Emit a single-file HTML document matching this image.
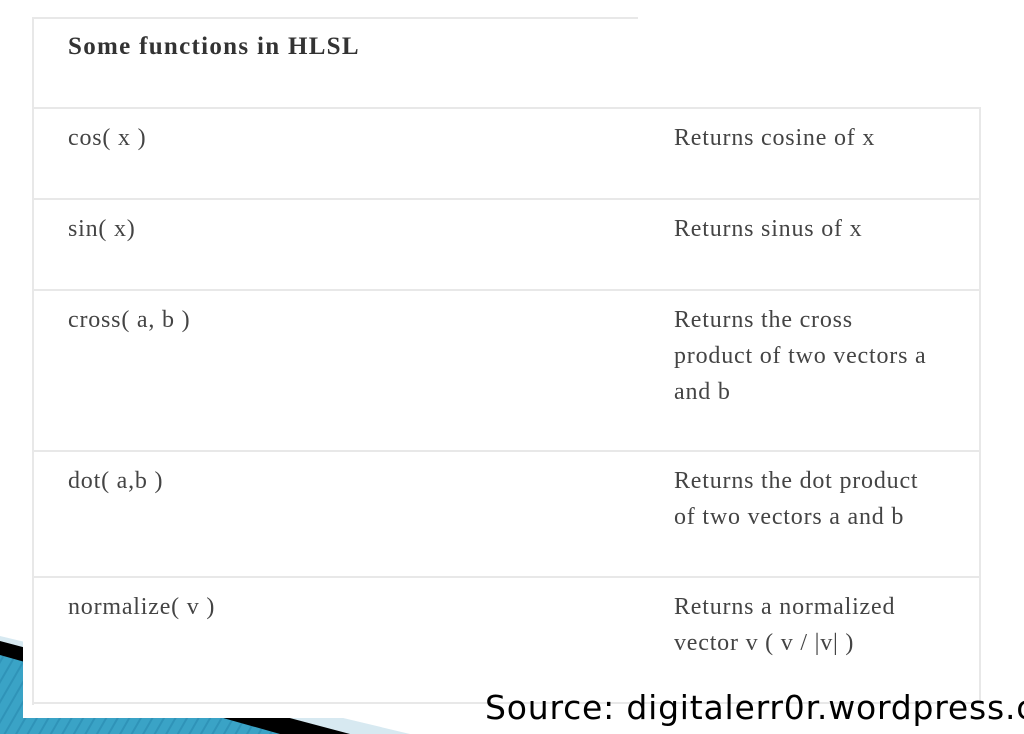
<!DOCTYPE html>
<html><head><style>
html,body{margin:0;width:1024px;height:734px;overflow:hidden}
body{background:#fff;position:relative;font-family:"Liberation Serif",serif;}
svg.bg{position:absolute;left:0;top:0}
.box{position:absolute;left:23px;top:0;width:1001px;height:718px;background:#fff}
.t{position:absolute;color:#444;font-size:24px;line-height:36px;letter-spacing:0.8px;white-space:nowrap}
.line{position:absolute;background:#e8e8e8}
.srcw{position:absolute;left:485px;top:688px;width:539px;height:46px;overflow:hidden}
.src{font-family:"DejaVu Sans","Liberation Sans",sans-serif;font-size:33px;color:#000;white-space:nowrap;letter-spacing:0.8px;line-height:40px}
</style></head><body>
<svg class="bg" width="1024" height="734">
<defs><pattern id="st" width="10" height="10" patternUnits="userSpaceOnUse" patternTransform="rotate(30)"><rect width="10" height="10" fill="#3aa3c6"/><rect width="2" height="10" fill="#2f93b8"/></pattern></defs>
<polygon points="0,636 410,734 0,734" fill="#d7e9f1"/>
<polygon points="0,641 350,734 0,734" fill="#000"/>
<polygon points="0,655 280,734 0,734" fill="url(#st)"/>
</svg>
<div class="box"></div>
<div class="line" style="left:32px;top:17px;width:606px;height:2px"></div>
<div class="line" style="left:32px;top:17px;width:2px;height:688px"></div>
<div class="line" style="left:979px;top:108px;width:2px;height:597px"></div>
<div class="line" style="left:32px;top:107px;width:949px;height:2px"></div>
<div class="line" style="left:32px;top:198px;width:949px;height:2px"></div>
<div class="line" style="left:32px;top:289px;width:949px;height:2px"></div>
<div class="line" style="left:32px;top:450px;width:949px;height:2px"></div>
<div class="line" style="left:32px;top:576px;width:949px;height:2px"></div>
<div class="line" style="left:32px;top:702px;width:949px;height:2px"></div>
<div class="t" style="left:68px;top:29px;font-weight:bold;color:#333;font-size:25px;letter-spacing:1.3px">Some functions in HLSL</div>
<div class="t" style="left:68px;top:120px">cos( x )</div>
<div class="t" style="left:674px;top:120px">Returns cosine of x</div>
<div class="t" style="left:68px;top:211px">sin( x)</div>
<div class="t" style="left:674px;top:211px">Returns sinus of x</div>
<div class="t" style="left:68px;top:302px">cross( a, b )</div>
<div class="t" style="left:674px;top:302px">Returns the cross<br>product of two vectors a<br>and b</div>
<div class="t" style="left:68px;top:463px">dot( a,b )</div>
<div class="t" style="left:674px;top:463px">Returns the dot product<br>of two vectors a and b</div>
<div class="t" style="left:68px;top:589px">normalize( v )</div>
<div class="t" style="left:674px;top:589px">Returns a normalized<br>vector v ( v / |v| )</div>
<div class="srcw"><div class="src">Source: digitalerr0r.wordpress.com</div></div>
</body></html>
